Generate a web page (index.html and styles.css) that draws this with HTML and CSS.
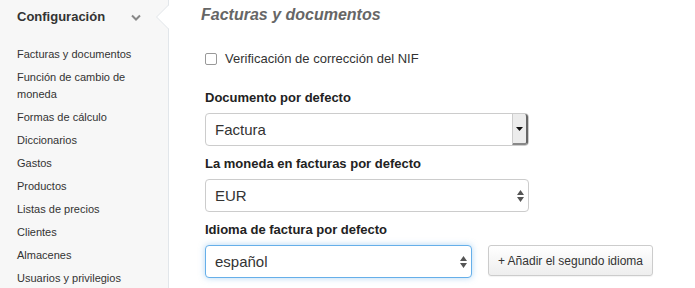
FILE: index.html
```html
<!DOCTYPE html>
<html lang="es">
<head>
  <meta charset="UTF-8" />
  <title>Configuración</title>
  <link rel="stylesheet" href="styles.css">
</head>
<body>

  <!-- Sidebar -->
  <div class="sidebar">
    <div class="sidebar-head">
      <span>Configuración</span>
      <svg class="chevron" width="10" height="7" viewBox="0 0 10 7"><path d="M1 1.5 L5 5.5 L9 1.5" fill="none" stroke="#888" stroke-width="2"/></svg>
    </div>
    <ul class="menu">
      <li>Facturas y documentos</li>
      <li>Función de cambio de moneda</li>
      <li>Formas de cálculo</li>
      <li>Diccionarios</li>
      <li>Gastos</li>
      <li>Productos</li>
      <li>Listas de precios</li>
      <li>Clientes</li>
      <li>Almacenes</li>
      <li>Usuarios y privilegios</li>
    </ul>
    <svg class="notch" width="13" height="24" viewBox="0 0 13 24"><path d="M13 0 L1 12 L13 24 Z" fill="#fff"/><path d="M12.5 0 L0.5 12 L12.5 24" fill="none" stroke="#e2e6ea" stroke-width="1"/></svg>
  </div>

  <!-- Main -->
  <div class="main">
    <h2 class="page-title">Facturas y documentos</h2>

    <label class="check-row">
      <span class="checkbox"></span>
      Verificación de corrección del NIF
    </label>

    <div class="field">
      <div class="field-label">Documento por defecto</div>
      <div class="select select-old">
        <span>Factura</span>
        <span class="old-btn"><svg width="7" height="4" viewBox="0 0 7 4"><path d="M0 0 L7 0 L3.5 4 Z" fill="#111"/></svg></span>
      </div>
    </div>

    <div class="field">
      <div class="field-label">La moneda en facturas por defecto</div>
      <div class="select">
        <span>EUR</span>
        <svg class="updown" width="7" height="12" viewBox="0 0 7 12"><path d="M3.5 0 L7 5 L0 5 Z M3.5 12 L7 7 L0 7 Z" fill="#555"/></svg>
      </div>
    </div>

    <div class="field">
      <div class="field-label">Idioma de factura por defecto</div>
      <div class="field-row">
        <div class="select select-short focused">
          <span>español</span>
          <svg class="updown" width="7" height="12" viewBox="0 0 7 12"><path d="M3.5 0 L7 5 L0 5 Z M3.5 12 L7 7 L0 7 Z" fill="#555"/></svg>
        </div>
        <button class="btn">+ Añadir el segundo idioma</button>
      </div>
    </div>
  </div>

</body>
</html>
```

FILE: styles.css
```css
* {
  margin: 0;
  padding: 0;
  box-sizing: border-box;
}

body {
  font-family: 'Liberation Sans', Arial, sans-serif;
  color: #333;
  background: #fff;
  display: flex;
  height: 288px;
  overflow: hidden;
}

/* Sidebar */
.sidebar {
  position: relative;
  width: 169px;
  flex-shrink: 0;
  background: #f7f7f7;
  border-right: 1px solid #e2e6ea;
  padding-left: 17px;
}

.sidebar-head {
  display: flex;
  align-items: center;
  justify-content: space-between;
  height: 33px;
  padding-right: 27px;
  font-size: 13px;
  font-weight: bold;
  color: #333;
}

.chevron {
  margin-top: 2px;
}

.notch {
  position: absolute;
  right: -1px;
  top: 5px;
}

.menu {
  list-style: none;
  margin-top: 13px;
  padding-right: 14px;
}

.menu li {
  font-size: 11px;
  line-height: 17px;
  padding-bottom: 6px;
  color: #333;
}

/* Main */
.main {
  flex: 1;
  padding-left: 32px;
}

.page-title {
  font-size: 16px;
  font-weight: bold;
  font-style: italic;
  color: #666;
  height: 29px;
  line-height: 29px;
}

.check-row {
  display: flex;
  align-items: center;
  gap: 8px;
  font-size: 13px;
  margin: 22px 0 0 4px;
  color: #333;
}

.checkbox {
  width: 12px;
  height: 12px;
  border: 1px solid #999;
  border-radius: 2px;
  background: #fff;
}

.field {
  margin-top: 23px;
  padding-left: 4px;
}

.field + .field {
  margin-top: 9px;
}

.field-label {
  font-size: 13px;
  font-weight: bold;
  line-height: 17px;
  margin-bottom: 7px;
  color: #222;
}

.field-row {
  display: flex;
  align-items: flex-start;
  gap: 16px;
}

.select {
  display: flex;
  align-items: center;
  justify-content: space-between;
  flex-shrink: 0;
  width: 324px;
  height: 33px;
  border: 1px solid #ccc;
  border-radius: 4px;
  padding: 0 0 0 9px;
  font-size: 15px;
  color: #333;
  background: #fff;
}

.select-short {
  width: 267px;
}

.select .updown {
  margin-right: 4px;
}

.old-btn {
  display: flex;
  align-items: center;
  justify-content: center;
  width: 16px;
  height: 31px;
  background: #ececec;
  border-left: 1px solid #ccc;
  border-right: 2px solid #666;
  border-bottom: 2px solid #888;
  border-radius: 0 3px 3px 0;
}

.focused {
  border-color: #66afe9;
  box-shadow: 0 0 6px rgba(102, 175, 233, 0.5);
}

.btn {
  flex-shrink: 0;
  width: 165px;
  height: 31px;
  white-space: nowrap;
  font-family: 'Liberation Sans', Arial, sans-serif;
  font-size: 12px;
  color: #333;
  background: linear-gradient(#fff, #eee);
  border: 1px solid #ccc;
  border-radius: 3px;
  box-shadow: 0 1px 1px rgba(0, 0, 0, 0.05);
}
```
